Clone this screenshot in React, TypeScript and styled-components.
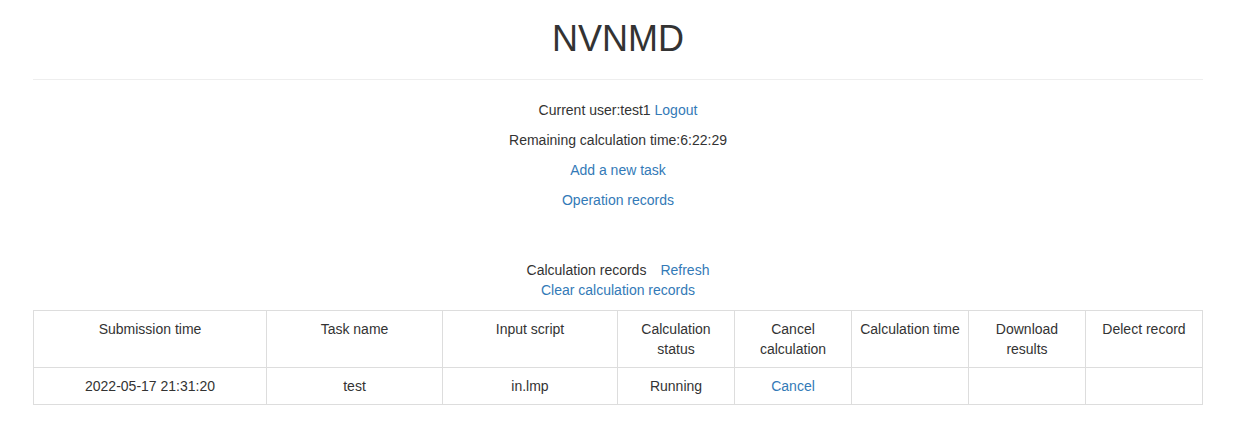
import React from "react";
import styled, { createGlobalStyle } from "styled-components";

const Global = createGlobalStyle`
  html, body { margin: 0; padding: 0; background: #fff; }
  body {
    font-family: "Liberation Sans", Arial, Helvetica, sans-serif;
    font-size: 14px;
    line-height: 1.42857143;
    color: #333;
  }
  * { box-sizing: border-box; }
`;

const Container = styled.div`
  width: 1170px;
  margin: 0 0 0 calc(50% - 586.5px);
`;

const Title = styled.h1`
  margin: 19px 0 0;
  font-size: 36px;
  font-weight: 500;
  line-height: 1.1;
  text-align: center;
  color: #333;
`;

const Rule = styled.hr`
  margin: 20px 0;
  border: 0;
  border-top: 1px solid #eee;
  height: 0;
`;

const Info = styled.div`
  text-align: center;
`;

const Line = styled.p<{ $gap?: number }>`
  margin: 0 0 ${(p) => p.$gap ?? 10}px;
`;

const Link = styled.a<{ $ml?: number }>`
  color: #337ab7;
  text-decoration: none;
  margin-left: ${(p) => p.$ml ?? 0}px;
  cursor: pointer;
`;

const Records = styled.div`
  margin-top: 50px;
  text-align: center;
`;

const Table = styled.table`
  width: 1170px;
  margin-top: 10px;
  border-collapse: collapse;
  border-spacing: 0;
  table-layout: fixed;
`;

const Th = styled.th`
  border: 1px solid #ddd;
  padding: 8px;
  font-weight: normal;
  text-align: center;
  vertical-align: top;
`;

const Td = styled.td`
  border: 1px solid #ddd;
  padding: 8px;
  text-align: center;
  vertical-align: top;
`;

const cols = [233, 176, 175, 117, 117, 117, 117, 117];
const heads = [
  "Submission time",
  "Task name",
  "Input script",
  "Calculation status",
  "Cancel calculation",
  "Calculation time",
  "Download results",
  "Delect record",
];

export default function App() {
  return (
    <>
      <Global />
      <Container>
        <Title>NVNMD</Title>
        <Rule />
        <Info>
          <Line>
            Current user:test1 <Link>Logout</Link>
          </Line>
          <Line>Remaining calculation time:6:22:29</Line>
          <Line>
            <Link>Add a new task</Link>
          </Line>
          <Line>
            <Link>Operation records</Link>
          </Line>
        </Info>
        <Records>
          <Line $gap={0}>
            Calculation records<Link $ml={14}>Refresh</Link>
          </Line>
          <Line $gap={0}>
            <Link>Clear calculation records</Link>
          </Line>
        </Records>
        <Table>
          <colgroup>
            {cols.map((w, i) => (
              <col key={i} style={{ width: w }} />
            ))}
          </colgroup>
          <thead>
            <tr>
              {heads.map((h) => (
                <Th key={h}>{h}</Th>
              ))}
            </tr>
          </thead>
          <tbody>
            <tr>
              <Td>2022-05-17 21:31:20</Td>
              <Td>test</Td>
              <Td>in.lmp</Td>
              <Td>Running</Td>
              <Td>
                <Link>Cancel</Link>
              </Td>
              <Td></Td>
              <Td></Td>
              <Td></Td>
            </tr>
          </tbody>
        </Table>
      </Container>
    </>
  );
}
